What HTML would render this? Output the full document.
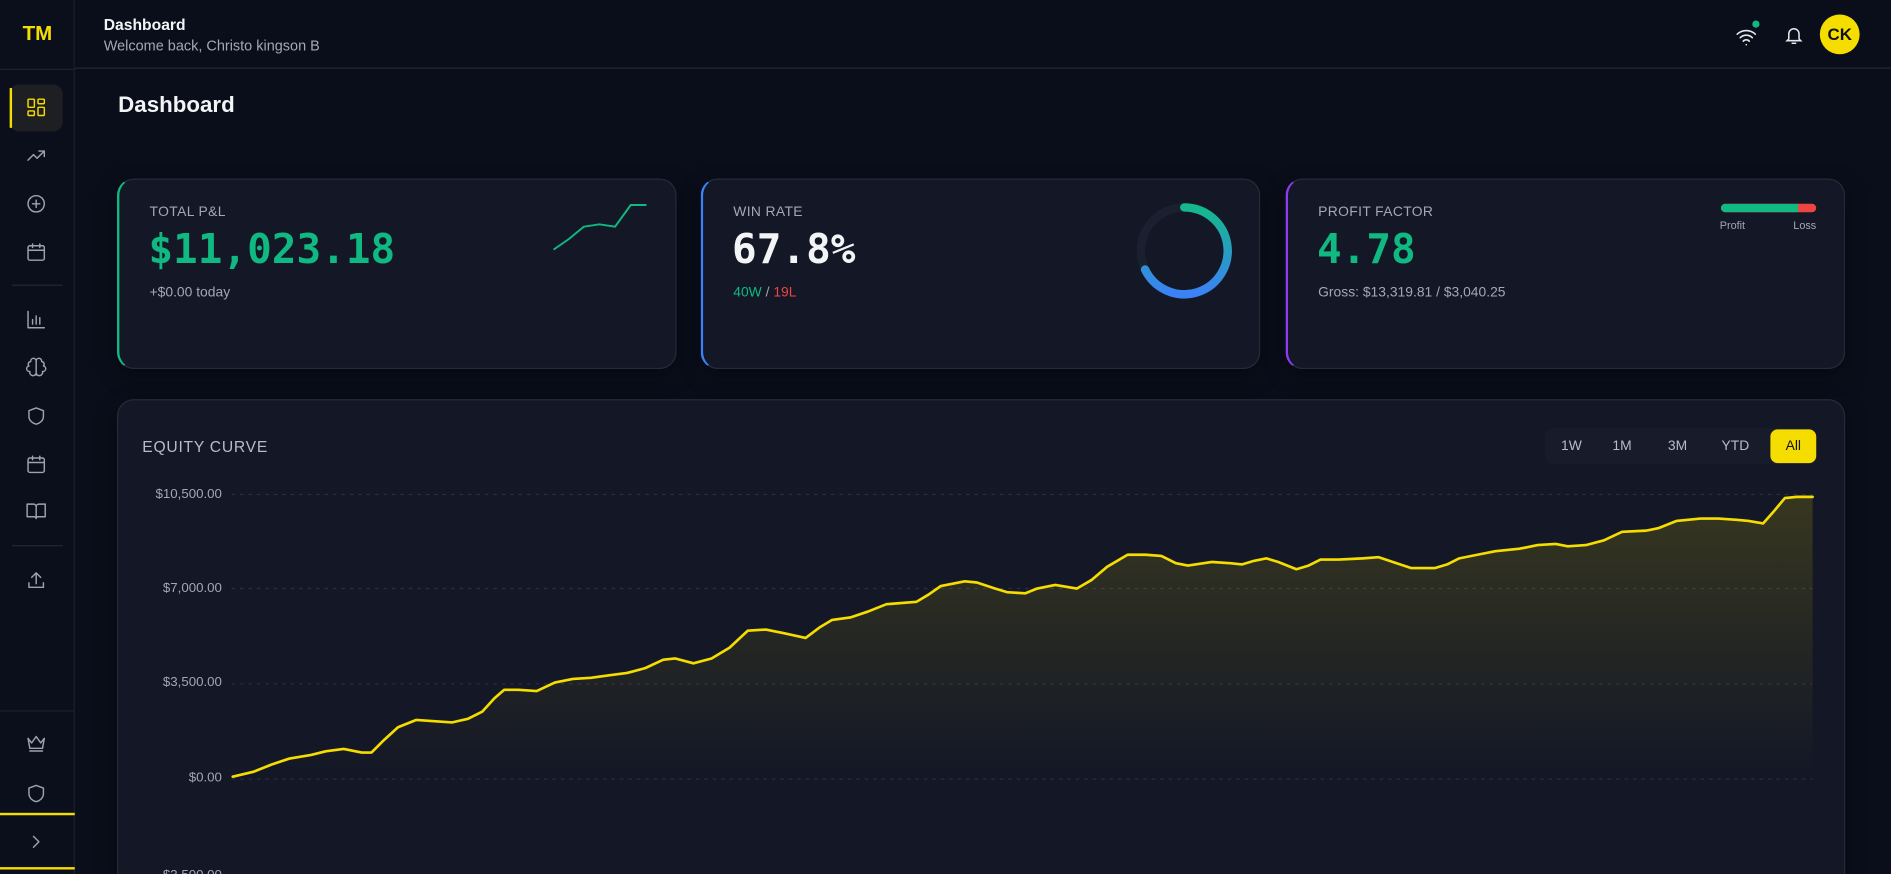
<!DOCTYPE html>
<html><head><meta charset="utf-8"><style>
*{margin:0;padding:0;box-sizing:border-box}
html,body{width:1891px;height:874px;overflow:hidden;background:#0a0e1a}
#s{position:absolute;left:0;top:0;width:1568px;height:725px;transform:scale(1.20599);transform-origin:0 0;font-family:"Liberation Sans",sans-serif;color:#e5e7eb;background:#0a0e1a;overflow:hidden}
.abs{position:absolute}
.side{left:0;top:0;width:62px;height:725px;background:#0b0f1b;border-right:1px solid #1c2130}
.hdr{left:62px;top:0;right:0;height:57px;border-bottom:1px solid #252a38;background:#0a0e1a}
.card{background:#131726;border:1px solid #262b3b;border-radius:14px;box-shadow:0 6px 18px rgba(0,0,0,.35)}
.lbl{font-size:11.5px;color:#a3a8b4;letter-spacing:.3px}
.mono{font-family:"DejaVu Sans Mono","Liberation Mono",monospace;font-weight:bold}
.ic{position:absolute;left:21px;width:18px;height:18px;fill:none;stroke:#9ca3af;stroke-width:1.6;stroke-linecap:round;stroke-linejoin:round}
.btn{position:absolute;top:0;height:28px;line-height:28px;font-size:11.5px;color:#b8bcc6;text-align:center}
.yl{position:absolute;right:1384px;font-size:11px;color:#a3a8b4;text-align:right}
</style></head><body><div id="s">
<div class="abs side">
 <div class="abs" style="left:0;width:62px;top:18px;text-align:center;color:#f5dd00;font-weight:bold;font-size:17px">TM</div>
 <div class="abs" style="left:0;top:57px;width:62px;border-top:1px solid #1c2130"></div>
 <div class="abs" style="left:8px;top:70px;width:44px;height:39px;background:#1d1f22;border-radius:8px"></div>
 <div class="abs" style="left:8px;top:73px;width:2px;height:33px;background:#f5dd00"></div>
 <svg class="ic" style="top:80px;stroke:#f5dd00" viewBox="0 0 24 24"><rect x="3" y="3" width="7" height="9" rx="1"/><rect x="14" y="3" width="7" height="5" rx="1"/><rect x="14" y="12" width="7" height="9" rx="1"/><rect x="3" y="16" width="7" height="5" rx="1"/></svg>
 <svg class="ic" style="top:120px" viewBox="0 0 24 24"><path d="M3 17l6-6 4 4 8-8M15 7h6v6"/></svg>
 <svg class="ic" style="top:160px" viewBox="0 0 24 24"><circle cx="12" cy="12" r="9"/><path d="M12 8v8M8 12h8"/></svg>
 <svg class="ic" style="top:200px" viewBox="0 0 24 24"><rect x="3" y="5" width="18" height="16" rx="2"/><path d="M3 10h18M8 3v4M16 3v4"/></svg>
 <div class="abs" style="left:10px;width:42px;top:236px;border-top:1px solid #232838"></div>
 <svg class="ic" style="top:256px" viewBox="0 0 24 24"><path d="M3 3v18h18M8 17v-5M12 17V8M16 17v-7"/></svg>
 <svg class="ic" style="top:296px" viewBox="0 0 24 24"><path d="M12 4a3 3 0 0 0-6 1 3 3 0 0 0-2 5 3 3 0 0 0 1 6 3 3 0 0 0 7 2zM12 4a3 3 0 0 1 6 1 3 3 0 0 1 2 5 3 3 0 0 1-1 6 3 3 0 0 1-7 2zM12 4v16"/></svg>
 <svg class="ic" style="top:336px" viewBox="0 0 24 24"><path d="M12 3l8 3v6c0 5-4 8-8 9-4-1-8-4-8-9V6z"/></svg>
 <svg class="ic" style="top:376px" viewBox="0 0 24 24"><rect x="3" y="5" width="18" height="16" rx="2"/><path d="M3 10h18M8 3v4M16 3v4"/></svg>
 <svg class="ic" style="top:415px" viewBox="0 0 24 24"><path d="M2 4h7a3 3 0 0 1 3 3v13a2 2 0 0 0-2-2H2zM22 4h-7a3 3 0 0 0-3 3v13a2 2 0 0 1 2-2h8z"/></svg>
 <div class="abs" style="left:10px;width:42px;top:452px;border-top:1px solid #232838"></div>
 <svg class="ic" style="top:472px" viewBox="0 0 24 24"><path d="M4 15v5h16v-5M12 16V4M7 9l5-5 5 5"/></svg>
 <div class="abs" style="left:0;width:62px;top:589px;border-top:1px solid #1c2130"></div>
 <svg class="ic" style="top:607px" viewBox="0 0 24 24"><path d="M3 7l4 5 5-7 5 7 4-5-2 11H5zM5 21h14"/></svg>
 <svg class="ic" style="top:649px" viewBox="0 0 24 24"><path d="M12 3l8 3v6c0 5-4 8-8 9-4-1-8-4-8-9V6z"/></svg>
 <div class="abs" style="left:0;width:62px;top:674px;border-top:2px solid #f5dd00"></div>
 <svg class="ic" style="top:689px" viewBox="0 0 24 24"><path d="M9 6l6 6-6 6"/></svg>
 <div class="abs" style="left:0;width:62px;top:719px;border-top:2px solid #f5dd00"></div>
</div>
<div class="abs hdr">
 <div class="abs" style="left:24px;top:13px;font-size:13px;font-weight:bold;color:#f3f4f6">Dashboard</div>
 <div class="abs" style="left:24px;top:31px;font-size:12px;color:#a3a8b4">Welcome back, Christo kingson B</div>
 <svg class="abs" style="left:1376px;top:20px" width="20" height="20" viewBox="0 0 24 24" fill="none" stroke="#e5e7eb" stroke-width="1.6" stroke-linecap="round"><path d="M3 10a13 13 0 0 1 18 0M6 13.5a8.5 8.5 0 0 1 12 0M9 17a4 4 0 0 1 6 0M12 20.5h.01"/></svg>
 <div class="abs" style="left:1391px;top:17px;width:6px;height:6px;border-radius:50%;background:#10b981"></div>
 <svg class="abs" style="left:1417px;top:21px" width="17" height="17" viewBox="0 0 24 24" fill="none" stroke="#e5e7eb" stroke-width="1.8" stroke-linecap="round"><path d="M6 16V10a6 6 0 0 1 12 0v6l2 2H4zM10 21h4"/></svg>
 <div class="abs" style="left:1447px;top:12px;width:33px;height:33px;border-radius:50%;background:#f5dd00;color:#111;font-weight:bold;font-size:14px;line-height:33px;text-align:center">CK</div>
</div>
<div class="abs" style="left:98px;top:76px;font-size:18.5px;font-weight:bold;color:#f3f4f6">Dashboard</div>

<div class="abs card" style="left:97px;top:148px;width:464px;height:158px;border-left:2px solid #10b981">
 <div class="abs lbl" style="left:25px;top:21px">TOTAL P&amp;L</div>
 <div class="abs mono" style="left:24px;top:38px;font-size:34px;color:#10b981">$11,023.18</div>
 <div class="abs" style="left:25px;top:88px;font-size:11.5px;color:#a3a8b4">+$0.00 today</div>
</div>
<div class="abs card" style="left:581px;top:148px;width:464px;height:158px;border-left:2px solid #3b82f6">
 <div class="abs lbl" style="left:25px;top:21px">WIN RATE</div>
 <div class="abs mono" style="left:24px;top:38px;font-size:34px;color:#f3f4f6">67.8%</div>
 <div class="abs" style="left:25px;top:88px;font-size:11.5px;color:#a3a8b4"><span style="color:#10b981">40W</span> / <span style="color:#ef4444">19L</span></div>
</div>
<div class="abs card" style="left:1066px;top:148px;width:464px;height:158px;border-left:2px solid #8b3cf0">
 <div class="abs lbl" style="left:25px;top:21px">PROFIT FACTOR</div>
 <div class="abs mono" style="left:24px;top:38px;font-size:34px;color:#10b981">4.78</div>
 <div class="abs" style="left:25px;top:88px;font-size:11.5px;color:#a3a8b4">Gross: $13,319.81 / $3,040.25</div>
 <div class="abs" style="left:359px;top:20px;width:79px;height:7px;border-radius:4px;background:#ef4444;overflow:hidden"><div style="width:64px;height:7px;background:#10b981"></div></div>
 <div class="abs" style="left:358px;top:33px;font-size:9px;color:#a3a8b4">Profit</div>
 <div class="abs" style="left:419px;top:33px;font-size:9px;color:#a3a8b4">Loss</div>
</div>

<div class="abs card" style="left:97px;top:331px;width:1433px;height:460px">
 <div class="abs" style="left:20px;top:31px;font-size:13px;color:#b8bcc6;letter-spacing:.6px">EQUITY CURVE</div>
 <div class="abs" style="left:1183px;top:23px;width:226px;height:30px;background:#181c2a;border-radius:8px">
  <div class="btn" style="left:6px;width:32px;top:1px">1W</div>
  <div class="btn" style="left:48px;width:32px;top:1px">1M</div>
  <div class="btn" style="left:94px;width:32px;top:1px">3M</div>
  <div class="btn" style="left:140px;width:36px;top:1px">YTD</div>
  <div class="btn" style="left:187px;width:38px;top:1px;background:#f5dd00;color:#111;border-radius:6px">All</div>
 </div>
</div>
<div class="yl" style="top:404px">$10,500.00</div>
<div class="yl" style="top:482px">$7,000.00</div>
<div class="yl" style="top:560px">$3,500.00</div>
<div class="yl" style="top:639px">$0.00</div>
<div class="yl" style="top:720px">-$3,500.00</div>

<svg class="abs" style="left:0;top:0" width="1568" height="725" viewBox="0 0 1568 725">
 <defs>
  <linearGradient id="fa" x1="0" y1="0" x2="0" y2="1"><stop offset="0" stop-color="#f5dd00" stop-opacity=".16"/><stop offset="1" stop-color="#f5dd00" stop-opacity="0"/></linearGradient>
  <linearGradient id="dg" gradientUnits="userSpaceOnUse" x1="982" y1="172" x2="982" y2="244"><stop offset="0" stop-color="#14b88a"/><stop offset="1" stop-color="#3b82f6"/></linearGradient>
 </defs>
 <g stroke="#2a2f40" stroke-dasharray="3 4" stroke-width="1"><path d="M192 410H1503M192 488H1503M192 567H1503M192 646H1503"/></g>
 <path d="M193,644 L210,640 225,634 240,629 258,626 270,623 285,621 300,624 308,624 318,614 330,603 345,597 360,598 375,599 388,596 400,590 410,579 418,572 430,572 445,573 460,566 475,563 490,562 505,560 520,558 535,554 550,547 560,546 575,550 590,546 605,537 620,523 635,522 650,525 668,529 680,520 690,514 705,512 720,507 735,501 760,499 770,493 780,486 800,482 810,483 825,488 835,491 850,492 860,488 875,485 893,488 905,481 918,470 935,460 950,460 963,461 975,467 985,469 1005,466 1020,467 1030,468 1040,465 1050,463 1060,466 1075,472 1085,469 1095,464 1110,464 1130,463 1143,462 1155,466 1170,471 1190,471 1200,468 1210,463 1225,460 1240,457 1260,455 1275,452 1290,451 1300,453 1315,452 1330,448 1345,441 1365,440 1375,438 1390,432 1410,430 1425,430 1440,431 1450,432 1462,434 1470,425 1480,413 1490,412 1503,412 L1503,646 L193,646Z" fill="url(#fa)"/>
 <polyline fill="none" stroke="#f5dd00" stroke-width="2.2" stroke-linejoin="round" stroke-linecap="round" points="193,644 210,640 225,634 240,629 258,626 270,623 285,621 300,624 308,624 318,614 330,603 345,597 360,598 375,599 388,596 400,590 410,579 418,572 430,572 445,573 460,566 475,563 490,562 505,560 520,558 535,554 550,547 560,546 575,550 590,546 605,537 620,523 635,522 650,525 668,529 680,520 690,514 705,512 720,507 735,501 760,499 770,493 780,486 800,482 810,483 825,488 835,491 850,492 860,488 875,485 893,488 905,481 918,470 935,460 950,460 963,461 975,467 985,469 1005,466 1020,467 1030,468 1040,465 1050,463 1060,466 1075,472 1085,469 1095,464 1110,464 1130,463 1143,462 1155,466 1170,471 1190,471 1200,468 1210,463 1225,460 1240,457 1260,455 1275,452 1290,451 1300,453 1315,452 1330,448 1345,441 1365,440 1375,438 1390,432 1410,430 1425,430 1440,431 1450,432 1462,434 1470,425 1480,413 1490,412 1503,412"/>
 <polyline fill="none" stroke="#10b981" stroke-width="1.6" points="459,207 472,198 484,188 497,186 510,188 523,170 536,170"/>
 <circle cx="982" cy="208" r="36" fill="none" stroke="#1b2030" stroke-width="7"/>
 <path d="M982 172 A36 36 0 1 1 949.5 223.5" fill="none" stroke="url(#dg)" stroke-width="7" stroke-linecap="round"/>
</svg>
</div></body></html>
